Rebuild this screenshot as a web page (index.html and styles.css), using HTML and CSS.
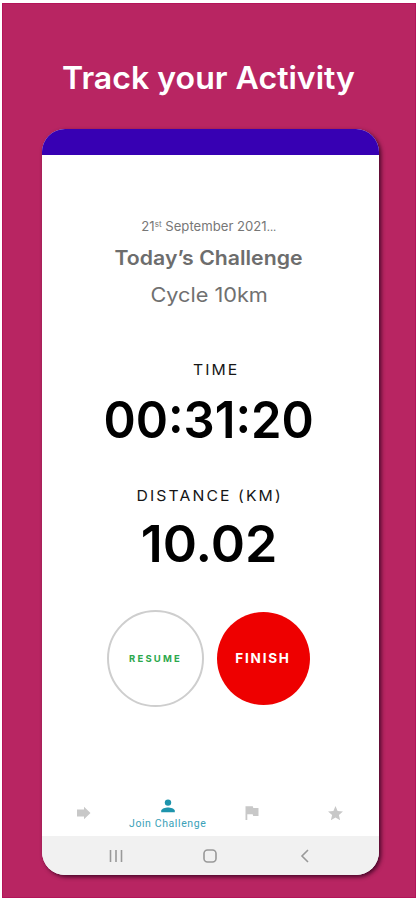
FILE: index.html
```html
<!DOCTYPE html>
<html lang="en">
<head>
<meta charset="utf-8">
<title>Track your Activity</title>
<link rel="stylesheet" href="styles.css">
</head>
<body>
<main class="poster">
  <h1 class="title"><span>Track your Activity</span></h1>
  <section class="phone">
    <div class="status"></div>
    <div class="content">
      <p class="date"><span>21<sup>st</sup> September 2021<i>...</i></span></p>
      <h2 class="heading"><span>Today’s Challenge</span></h2>
      <p class="goal"><span>Cycle 10km</span></p>
      <p class="label time-label"><span>TIME</span></p>
      <p class="value time"><span>00:31:20</span></p>
      <p class="label distance-label"><span>DISTANCE (KM)</span></p>
      <p class="value distance"><span>10.02</span></p>
      <div class="actions">
        <button class="resume"><span>RESUME</span></button>
        <button class="finish"><span>FINISH</span></button>
      </div>
    </div>
    <nav class="tabs">
      <div class="tab"><svg width="14" height="14" viewBox="0 0 14 14"><path d="M0 3.500h7V0.800L13.500 7 7 13.200V10.500H0z"/></svg></div>
      <div class="tab active"><svg width="14" height="14" viewBox="0 0 14 14"><circle cx="7" cy="3.600" r="3.200"/><path d="M.2 13.200v-1.400C.2 9.500 4.700 8.400 7 8.400s6.800 1.100 6.800 3.400v1.400z"/></svg><span>Join Challenge</span></div>
      <div class="tab"><svg width="14" height="14" viewBox="0 0 14 14"><path d="M.5.3h7.300l.5 1.600h5.200v8H8.200l-.5-1.600H2.300V14H.5z"/></svg></div>
      <div class="tab"><svg width="15" height="15" viewBox="2 2 20 20"><path d="M12 17.270 18.180 21l-1.640-7.030L22 9.240l-7.190-.61L12 2 9.190 8.630 2 9.240l5.460 4.730L5.820 21z"/></svg></div>
    </nav>
    <div class="system">
      <svg width="14" height="14" viewBox="0 0 14 14"><path d="M1.500 1v12M7 1v12M12.500 1v12"/></svg>
      <svg width="14" height="14" viewBox="0 0 14 14"><rect x="1" y="1" width="12" height="12" rx="3.500"/></svg>
      <svg width="14" height="14" viewBox="0 0 14 14"><path d="M10 1 4 7l6 6"/></svg>
    </div>
  </section>
</main>
</body>
</html>
```
FILE: styles.css
```css
* { box-sizing: border-box; }
body { margin: 0; background: #fff; font-family: Inter, "Liberation Sans", sans-serif; }
h1, h2, p { margin: 0; text-align: center; white-space: nowrap; }
h1 span, h2 span, p span, button span { display: inline-block; }
.poster {
  height: 895px;
  margin: 3px 1px 2px 2px;
  overflow: hidden;
  background: #b82562;
  border: 1px solid #b41459;
}
.title {
  height: 40px;
  margin: 54px 0 31px;
  line-height: 40px;
  font-size: 31px;
  font-weight: 600;
  color: #fff;
}
.title span { transform: scaleX(1.035); }
.phone {
  display: flex;
  flex-direction: column;
  width: 336.500px;
  height: 746px;
  margin-left: 39px;
  overflow: hidden;
  background: #fff;
  border-radius: 23px;
  box-shadow: 2px 2px 4px rgba(50, 0, 30, .85);
}
.status { height: 26px; background: #3700b3; }
.content { flex: 1; padding: 61px 3px 0 0; }
.date { height: 20px; line-height: 20px; font-size: 13px; color: #777; }
.date span { transform: scaleX(1.010); }
.date sup { font-size: 8px; line-height: 0; vertical-align: 4px; }
.date i { font-style: normal; font-size: 11px; }
.heading { height: 30px; margin-top: 7px; line-height: 30px; font-size: 20px; font-weight: 600; color: #6d6d6d; }
.heading span { transform: scaleX(1.062); }
.goal { height: 30px; margin-top: 7px; line-height: 30px; font-size: 20px; color: #707070; }
.goal span { transform: scaleX(1.085); }
.label { height: 20px; line-height: 20px; font-size: 15px; letter-spacing: 2px; color: #161616; }
.label span { transform: scaleX(1.050); }
.time-label { margin-top: 50px; padding-left: 15px; }
.distance-label { margin-top: 36px; padding-left: 2px; }
.value { height: 60px; line-height: 60px; font-size: 51px; font-weight: 600; color: #000; }
.time { margin-top: 10px; }
.time span { transform: scaleX(.96); }
.distance { margin-top: 8px; }
.distance span { transform: scaleX(1.020); }
.actions { display: flex; align-items: center; gap: 13px; margin: 35.500px 0 0 65px; }
.actions button {
  display: flex;
  flex: none;
  align-items: center;
  justify-content: center;
  padding: 0;
  border: 0;
  border-radius: 50%;
  font-family: inherit;
}
.actions .resume { width: 97px; height: 97px; border: 2px solid #cecece; background: #fff; color: #2ca84c; font-size: 9.500px; font-weight: 700; letter-spacing: 2.200px; }
.actions .finish { width: 93px; height: 93px; background: #ee0000; color: #fff; font-size: 13.500px; font-weight: 700; letter-spacing: 1.800px; }
.finish span { margin-right: 1px; }
.tabs { display: grid; grid-template-columns: repeat(4, 1fr); height: 50px; }
.tab { display: flex; flex-direction: column; align-items: center; padding: 20px 1px 0 0; fill: #c8c8c8; }
.tab svg { display: block; flex: none; }
.tab.active { padding-top: 13px; fill: #1e94ac; color: #3aa1b8; }
.tab span { margin-top: 4px; font: 10.500px/14px Roboto, sans-serif; letter-spacing: .6px; white-space: nowrap; }
.system { display: flex; align-items: center; justify-content: space-between; height: 39px; padding: 1px 67px 0 67px; background: #f1f1f1; }
.system svg { fill: none; stroke: #999; stroke-width: 1.600; }
```
